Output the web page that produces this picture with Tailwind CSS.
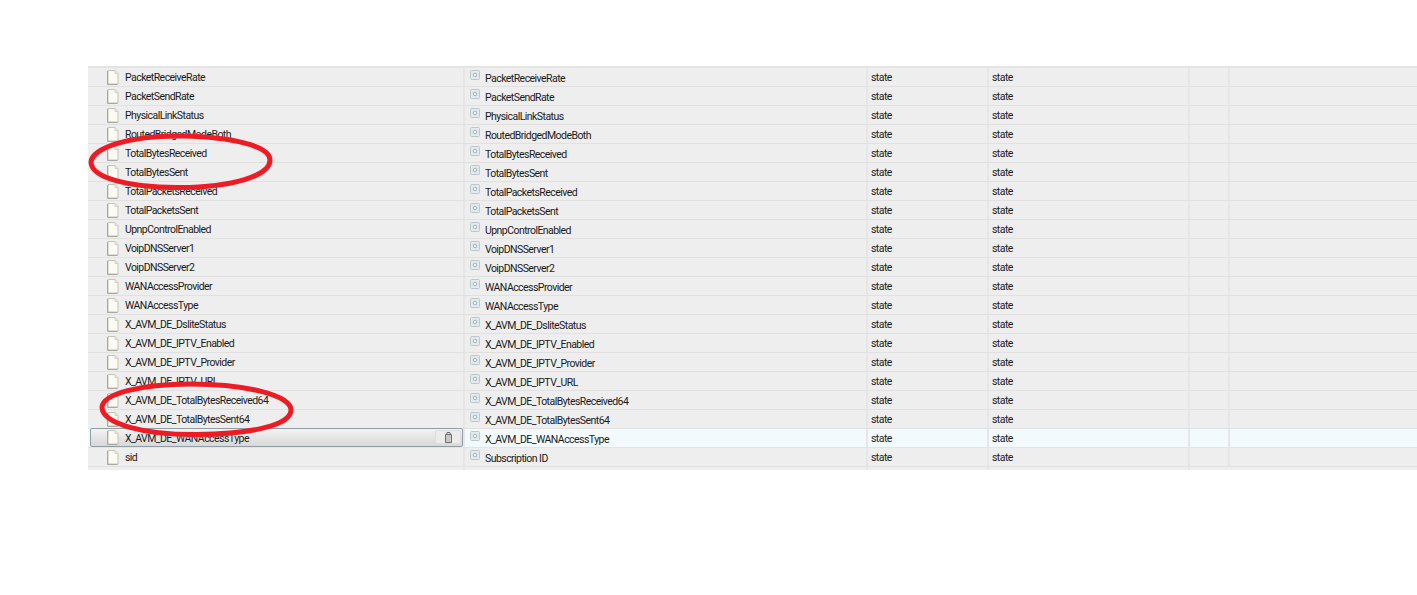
<!DOCTYPE html>
<html lang="en">
<head>
    <meta charset="UTF-8">
    <title>State variables</title>
    <script src="https://cdn.jsdelivr.net/npm/@tailwindcss/browser@4"></script>
</head>
<body class="bg-white h-[595px] overflow-hidden relative font-['Roboto',sans-serif] text-[10.5px] tracking-[-0.55px] text-[#1a1a1a]">
    <div class="pt-[66px] pl-[88px]">
        <div id="rows" class="border-t-2 border-[#e4e4e4]"></div>
    </div>

    <svg class="absolute left-0 top-0 pointer-events-none" width="1417" height="595" fill="none" stroke="#ed1c24" stroke-width="5">
        <path d="M183 136C130 135 92 148 91 162C91 178 130 188 180 187.500C232 187 270 176 270 160C270 146 232 137 183 136Z"/>
        <path d="M190 384C140 384 103 394 102 407C102 424 145 435 197 434.500C252 434 291 425 291 410C291 395 245 384 190 384Z"/>
    </svg>

    <script>
        const rows = [
            ["PacketReceiveRate", "PacketReceiveRate"],
            ["PacketSendRate", "PacketSendRate"],
            ["PhysicalLinkStatus", "PhysicalLinkStatus"],
            ["RoutedBridgedModeBoth", "RoutedBridgedModeBoth"],
            ["TotalBytesReceived", "TotalBytesReceived"],
            ["TotalBytesSent", "TotalBytesSent"],
            ["TotalPacketsReceived", "TotalPacketsReceived"],
            ["TotalPacketsSent", "TotalPacketsSent"],
            ["UpnpControlEnabled", "UpnpControlEnabled"],
            ["VoipDNSServer1", "VoipDNSServer1"],
            ["VoipDNSServer2", "VoipDNSServer2"],
            ["WANAccessProvider", "WANAccessProvider"],
            ["WANAccessType", "WANAccessType"],
            ["X_AVM_DE_DsliteStatus", "X_AVM_DE_DsliteStatus"],
            ["X_AVM_DE_IPTV_Enabled", "X_AVM_DE_IPTV_Enabled"],
            ["X_AVM_DE_IPTV_Provider", "X_AVM_DE_IPTV_Provider"],
            ["X_AVM_DE_IPTV_URL", "X_AVM_DE_IPTV_URL"],
            ["X_AVM_DE_TotalBytesReceived64", "X_AVM_DE_TotalBytesReceived64"],
            ["X_AVM_DE_TotalBytesSent64", "X_AVM_DE_TotalBytesSent64"],
            ["X_AVM_DE_WANAccessType", "X_AVM_DE_WANAccessType"],
            ["sid", "Subscription ID"]
        ];
        const hovered = 19;

        const fileIcon = `<svg class="ml-[19px] mr-[6px] shrink-0" width="12" height="15" viewBox="0 0 12 15"><path d="M1 .5h7l3 3v10.500H1z" fill="#fbfbf4" stroke="#c4c3b6"/><path d="M.5 1v13.500h10" fill="none" stroke="#a9a89c"/><path d="M8 .5v3h3" fill="#e8e8e0" stroke="#d2d1c6"/></svg>`;
        const activeFileIcon = `<svg class="ml-[16px] mr-[6px] shrink-0" width="12" height="15" viewBox="0 0 12 15"><path d="M1 .5h7l3 3v10.500H1z" fill="#fbfbf4" stroke="#c4c3b6"/><path d="M.5 1v13.500h10" fill="none" stroke="#a9a89c"/><path d="M8 .5v3h3" fill="#e8e8e0" stroke="#d2d1c6"/></svg>`;
        const varIcon = `<svg class="ml-[5px] mr-[5px] mt-[-4px] shrink-0" width="10" height="10" viewBox="0 0 10 10"><rect x=".5" y=".5" width="9" height="9" rx="1" fill="#e2eaed" stroke="#bac8cd"/><circle cx="5" cy="5" r="1.800" fill="#f2f6f7" stroke="#9fb2b9"/></svg>`;
        const trashIcon = `<svg width="9" height="11" viewBox="0 0 9 11" fill="#c9c9c9" stroke="#6f6f6f"><path d="M1.500 2.500h6v8h-6z"/><path d="M3 2.500v-2h3v2" fill="none"/></svg>`;

        document.getElementById("rows").innerHTML = rows.map(function (row, i) {
            const active = i === hovered;
            const rowClass = active ? "bg-[#f2fafe] border-[#d6e8f0]" : "bg-[#eeeeee] border-[#e1e1e1]";
            const first = active
                ? `<div class="w-[373px] h-[19px] ml-[2px] -mt-px shrink-0 flex items-center bg-gradient-to-b from-[#f3f3f3] to-[#d8d8d8] border border-[#8f9ea4] rounded-[2px] relative">${activeFileIcon}<span class="mt-[2px]">${row[0]}</span><div class="absolute right-[1px] top-[1px] w-[26px] h-[14px] bg-[#ececec] border border-[#dddddd] rounded-[2px] flex items-center justify-center">${trashIcon}</div></div>`
                : `<div class="w-[375px] shrink-0 flex items-center">${fileIcon}<span class="mt-[2px]">${row[0]}</span></div>`;
            return `
                <div class="flex h-[19px] border-b ${rowClass}">
                    ${first}
                    <div class="w-[403px] shrink-0 flex items-center border-l-2 border-[#e6e6e6]">${varIcon}<span class="mt-[4px]">${row[1]}</span></div>
                    <div class="w-[121px] shrink-0 flex items-center pl-[3px] pt-[2px] border-l-2 border-[#e6e6e6]">state</div>
                    <div class="w-[201px] shrink-0 flex items-center pl-[3px] pt-[2px] border-l-2 border-[#e6e6e6]">state</div>
                    <div class="w-[40px] shrink-0 border-l-2 border-[#e6e6e6]"></div>
                    <div class="flex-1 border-l-2 border-[#e6e6e6]"></div>
                </div>
            `;
        }).join("") + `
            <div class="flex h-[3px] bg-[#eeeeee]">
                <div class="w-[375px]"></div>
                <div class="w-[403px] border-l-2 border-[#e6e6e6]"></div>
                <div class="w-[121px] border-l-2 border-[#e6e6e6]"></div>
                <div class="w-[201px] border-l-2 border-[#e6e6e6]"></div>
                <div class="w-[40px] border-l-2 border-[#e6e6e6]"></div>
            </div>
        `;
    </script>
</body>
</html>
